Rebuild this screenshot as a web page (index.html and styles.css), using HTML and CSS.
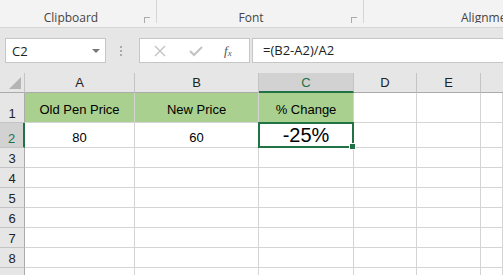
FILE: index.html
```html
<!DOCTYPE html>
<html lang="en">
<head>
    <meta charset="UTF-8">
    <title>Percent Change</title>
    <link rel="stylesheet" href="styles.css">
</head>
<body>
    <!-- Ribbon group labels -->
    <div class="ribbon">
        <div class="group group-clipboard">
            <span class="group-label">Clipboard</span>
            <span class="launcher"></span>
        </div>
        <div class="group group-font">
            <span class="group-label">Font</span>
            <span class="launcher"></span>
        </div>
        <div class="group group-align">
            <span class="group-label">Alignment</span>
        </div>
    </div>

    <!-- Formula bar -->
    <div class="formula-bar">
        <div class="name-box">
            <span>C2</span>
            <span class="caret"></span>
        </div>
        <div class="grip"></div>
        <div class="fx-box">
            <svg class="ico-x" width="12" height="12" viewBox="0 0 12 12"><path d="M1 1 L11 11 M11 1 L1 11" stroke="#c3c3c3" stroke-width="1.4" fill="none"/></svg>
            <svg class="ico-ok" width="14" height="12" viewBox="0 0 14 12"><path d="M1 6 L5 10 L13 2" stroke="#c3c3c3" stroke-width="2" fill="none"/></svg>
            <span class="fx">f<sub>x</sub></span>
        </div>
        <div class="formula-input">=(B2-A2)/A2</div>
    </div>

    <!-- Sheet grid -->
    <div class="sheet">
        <div class="corner"><span class="tri"></span></div>
        <div class="col-head">A</div>
        <div class="col-head">B</div>
        <div class="col-head active">C</div>
        <div class="col-head">D</div>
        <div class="col-head">E</div>
        <div class="col-head last"></div>

        <div class="row-head">1</div>
        <div class="cell green">Old Pen Price</div>
        <div class="cell green">New Price</div>
        <div class="cell green">% Change</div>
        <div class="cell"></div>
        <div class="cell"></div>
        <div class="cell"></div>

        <div class="row-head active">2</div>
        <div class="cell">80</div>
        <div class="cell">60</div>
        <div class="cell selected">-25%<span class="handle"></span></div>
        <div class="cell"></div>
        <div class="cell"></div>
        <div class="cell"></div>

        <div class="row-head">3</div><div class="cell"></div><div class="cell"></div><div class="cell"></div><div class="cell"></div><div class="cell"></div><div class="cell"></div>
        <div class="row-head">4</div><div class="cell"></div><div class="cell"></div><div class="cell"></div><div class="cell"></div><div class="cell"></div><div class="cell"></div>
        <div class="row-head">5</div><div class="cell"></div><div class="cell"></div><div class="cell"></div><div class="cell"></div><div class="cell"></div><div class="cell"></div>
        <div class="row-head">6</div><div class="cell"></div><div class="cell"></div><div class="cell"></div><div class="cell"></div><div class="cell"></div><div class="cell"></div>
        <div class="row-head">7</div><div class="cell"></div><div class="cell"></div><div class="cell"></div><div class="cell"></div><div class="cell"></div><div class="cell"></div>
        <div class="row-head">8</div><div class="cell"></div><div class="cell"></div><div class="cell"></div><div class="cell"></div><div class="cell"></div><div class="cell"></div>
        <div class="row-head"></div><div class="cell"></div><div class="cell"></div><div class="cell"></div><div class="cell"></div><div class="cell"></div><div class="cell"></div>
    </div>
</body>
</html>
```
FILE: styles.css
```css
body {
    margin: 0;
    width: 503px;
    height: 275px;
    overflow: hidden;
    background: #e6e6e6;
    font-family: "Open Sans", "Liberation Sans", sans-serif;
}
.ribbon {
    display: flex;
    height: 27px;
    background: #f3f3f3;
    border-bottom: 1px solid #d5d5d5;
    overflow: hidden;
}
.group {
    position: relative;
    flex-shrink: 0;
    display: flex;
    align-items: flex-end;
    justify-content: center;
    border-right: 1px solid #d5d5d5;
    margin-bottom: 4px;
}
.group-clipboard { width: 156px; }
.group-font { width: 206px; }
.group-align {
    flex: 1;
    border-right: none;
    justify-content: flex-start;
    padding-left: 97px;
    overflow: hidden;
}
.group-label {
    font-size: 12px;
    color: #444;
    line-height: 14px;
    margin-bottom: -2px;
    white-space: nowrap;
}
.group-clipboard .group-label { margin-right: 14px; }
.group-font .group-label { margin-right: 18px; }
.launcher {
    position: absolute;
    right: 6px;
    bottom: 0;
    width: 5px;
    height: 5px;
    border-left: 1px solid #aaa;
    border-top: 1px solid #aaa;
}
.formula-bar {
    display: flex;
    align-items: center;
    height: 45px;
}
.name-box {
    display: flex;
    align-items: center;
    justify-content: space-between;
    box-sizing: border-box;
    width: 101px;
    height: 25px;
    margin-left: 5px;
    padding: 0 5px 0 6px;
    background: #fff;
    border: 1px solid #c6c6c6;
    font-size: 13px;
    color: #222;
}
.caret {
    width: 0;
    height: 0;
    border-left: 4px solid transparent;
    border-right: 4px solid transparent;
    border-top: 4px solid #777;
}
.grip {
    width: 2px;
    height: 10px;
    margin: 0 15px 0 14px;
    border-left: 2px dotted #aaa;
}
.fx-box {
    display: flex;
    align-items: center;
    box-sizing: border-box;
    width: 111px;
    height: 25px;
    padding-left: 14px;
    background: #fff;
    border: 1px solid #c6c6c6;
}
.ico-ok { margin-left: 23px; }
.fx {
    margin-left: 21px;
    font-family: "Liberation Serif", serif;
    font-style: italic;
    font-size: 13px;
    color: #555;
}
.fx sub {
    font-size: 9px;
    vertical-align: -1px;
}
.formula-input {
    flex: 1;
    box-sizing: border-box;
    height: 25px;
    margin-left: 2px;
    padding-left: 10px;
    line-height: 23px;
    background: #fff;
    border: 1px solid #c6c6c6;
    border-right: none;
    font-size: 13px;
    color: #222;
}
.sheet {
    display: grid;
    grid-template-columns: 25px 110px 124px 95px 63px 64px 1fr;
    grid-template-rows: 20px 30px 25px repeat(7, 20px);
    background: #fff;
    font-family: "Liberation Sans", "Open Sans", sans-serif;
}
.corner {
    position: relative;
    background: #e6e6e6;
    border-right: 1px solid #c4c4c4;
    border-bottom: 1px solid #ababab;
}
.tri {
    position: absolute;
    right: 3px;
    bottom: 3px;
    width: 0;
    height: 0;
    border-left: 12px solid transparent;
    border-bottom: 12px solid #b4b4b4;
}
.col-head {
    display: flex;
    align-items: center;
    justify-content: center;
    background: #e6e6e6;
    border-right: 1px solid #c4c4c4;
    border-bottom: 1px solid #ababab;
    font-size: 13px;
    color: #222;
}
.col-head.active {
    background: #d2d2d2;
    border-bottom: 2px solid #217346;
    color: #217346;
}
.col-head.last { border-right: none; }
.row-head {
    display: flex;
    align-items: flex-end;
    justify-content: center;
    padding-bottom: 1px;
    background: #e6e6e6;
    border-right: 1px solid #ababab;
    border-bottom: 1px solid #c4c4c4;
    font-size: 13px;
    color: #222;
}
.row-head.active {
    background: #d2d2d2;
    border-right: 2px solid #217346;
    color: #217346;
}
.cell {
    display: flex;
    align-items: flex-end;
    justify-content: center;
    padding-bottom: 2px;
    border-right: 1px solid #d4d4d4;
    border-bottom: 1px solid #d4d4d4;
    font-size: 13px;
    color: #000;
    box-sizing: border-box;
}
.cell.green {
    background: #a9d08e;
    padding-bottom: 5px;
}
.cell.selected {
    position: relative;
    border: 2px solid #217346;
    margin: -1px 0 0 -1px;
    padding-bottom: 0;
    font-size: 20px;
    line-height: 22px;
}
.handle {
    position: absolute;
    right: -4px;
    bottom: -4px;
    width: 5px;
    height: 5px;
    background: #217346;
    border: 1px solid #fff;
}
```
